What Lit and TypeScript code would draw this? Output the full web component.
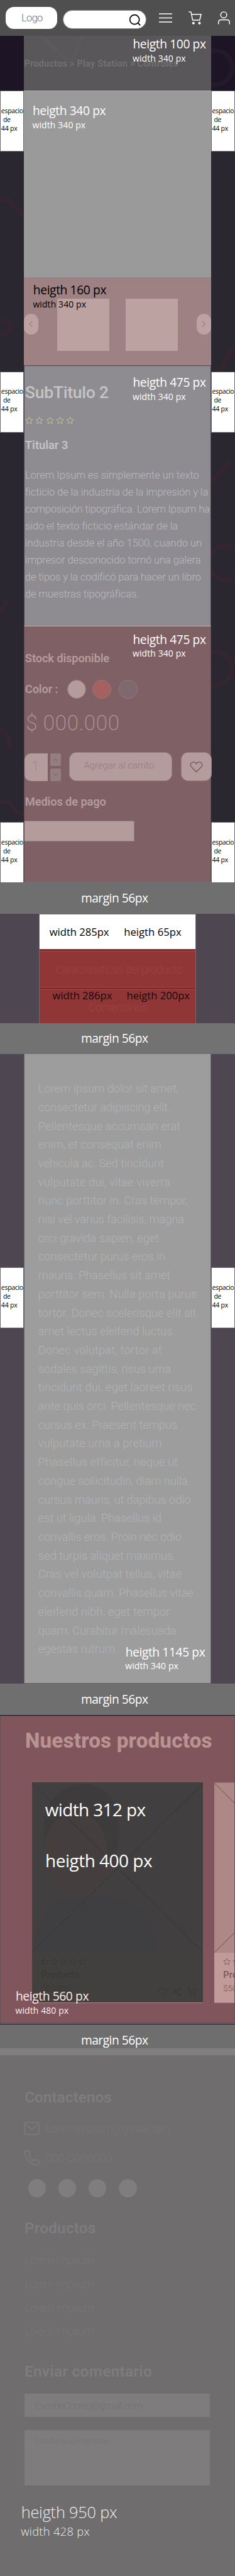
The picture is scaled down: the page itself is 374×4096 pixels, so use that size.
import { LitElement, html, css, svg, nothing } from "lit";
import { customElement, property } from "lit/decorators.js";

/** One line of text whose tracking is adjusted so that it spans exactly `w` pixels. */
@customElement("fit-line")
class FitLine extends LitElement {
  @property({ type: Number }) w = 100;
  @property() text = "";
  static styles = css`
    :host { display: block; white-space: pre; flex: none; }
    .ruler { display: block; }
    .run { display: inline-block; }
  `;
  firstUpdated() {
    const ruler = this.renderRoot.querySelector(".ruler") as HTMLElement;
    const run = this.renderRoot.querySelector(".run") as HTMLElement;
    const natural = (run.getBoundingClientRect().width / ruler.getBoundingClientRect().width) * this.w;
    run.style.letterSpacing = `${(this.w - natural) / this.text.length}px`;
  }
  render() {
    return html`<span class="ruler" style="width:${this.w}px"><span class="run">${this.text}</span></span>`;
  }
}

/** Measurement label: a large first line and a small second one. */
@customElement("size-note")
class SizeNote extends LitElement {
  @property() big = "";
  @property() small = "";
  @property({ type: Number }) bw = 133;
  @property({ type: Number }) sw = 97;
  static styles = css`
    :host { display: block; font-family: "Open Sans", "Noto Sans", sans-serif; color: #fff; }
    .big { font-size: 22px; line-height: 26px; padding-left: 0.5px; }
    .small { font-size: 16px; line-height: 26px; }
    :host([large]) .big { font-size: 29px; line-height: 34px; }
    :host([large]) .small { font-size: 21px; line-height: 36px; }
  `;
  render() {
    return html`<fit-line class="big" .w=${this.bw} .text=${this.big}></fit-line>
      <fit-line class="small" .w=${this.sw} .text=${this.small}></fit-line>`;
  }
}

@customElement("side-tag")
class SideTag extends LitElement {
  static styles = css`
    :host {
      display: block; box-sizing: border-box; width: 44px; height: 111px; flex: none;
      background: #fff; border: 1px solid #6a686b; color: #000;
      font: 12px/16px "Open Sans", "Noto Sans", sans-serif; padding: 27px 0 0 1px;
    }
    .mid { padding-left: 3.5px; }
  `;
  render() {
    return html`<fit-line .w=${40} .text=${"espacio"}></fit-line>
      <fit-line class="mid" .w=${13.5} .text=${"de"}></fit-line>
      <fit-line .w=${29.5} .text=${"44 px"}></fit-line>`;
  }
}

const STAR = "M12 1.8l3.1 6.9 7.1.7-5.4 4.9 1.6 7.4L12 17.9l-6.4 3.8 1.6-7.4L1.8 9.4l7.1-.7z";
const HEART = "M12 21L3 12C-.8 7.6 3 2.8 7 3.2c2.300 0 4 1.300 5 3 1-1.700 2.700-3 5-3 4-.4 7.800 4.400 4 8.800z";

const star = html`<svg class="star" viewBox="0 0 24 24"><path d=${STAR} /></svg>`;
const heart = html`<svg class="ico" viewBox="0 0 24 24"><path d=${HEART} /></svg>`;
const cart = html`<svg class="ico" viewBox="0 0 24 24"><path d="M0 1h4.500l3 15h12.800L23 5.500H5.500" /><circle class="dot" cx="9" cy="21.500" r="1.500" /><circle class="dot" cx="20" cy="21.500" r="1.500" /></svg>`;
const share = html`<svg class="ico" viewBox="0 0 24 24"><circle cx="18.500" cy="4.500" r="3" /><circle cx="5.500" cy="12" r="3" /><circle cx="18.500" cy="19.500" r="3" /><path d="M8 10.500l8-4.500M8 13.500l8 4.500" /></svg>`;
const chevron = (d: string) => html`<svg class="chev" viewBox="0 0 12 16"><path d=${d} /></svg>`;
const stars = html`${[0, 1, 2, 3, 4].map(() => star)}`;

const INTRO: [string, number][] = [
  ["Lorem Ipsum es simplemente un texto", 317],
  ["ficticio de la industria de la impresión y la", 333],
  ["composición tipográfica. Lorem Ipsum ha", 336],
  ["sido el texto ficticio estándar de la", 278],
  ["industria desde el año 1500, cuando un", 322],
  ["impresor desconocido tomó una galera", 320],
  ["de tipos y la codificó para hacer un libro", 320],
  ["de muestras tipográficas.", 207],
];

/* Each entry: the text of the line and the x at which it ends. */
const BODY: [string, number][] = [
  ["Lorem ipsum dolor sit amet,", 973], ["consectetur adipiscing elit.", 929],
  ["Pellentesque accumsan erat", 984], ["enim, et consequat enim", 880],
  ["vehicula ac. Sed tincidunt", 893], ["vulputate dui, vitae viverra", 929],
  ["nunc porttitor in. Cras tempor,", 1025], ["nisi vel varius facilisis, magna", 1004],
  ["orci gravida sapien, eget", 867], ["consectetur purus eros in", 901],
  ["mauris. Phasellus sit amet", 929], ["porttitor sem. Nulla porta purus", 1073],
  ["tortor. Donec scelerisque elit sit", 1071], ["amet lectus eleifend luctus.", 956],
  ["Donec volutpat, tortor at", 883], ["sodales sagittis, risus urna", 933],
  ["tincidunt dui, eget laoreet risus", 1050], ["ante quis orci. Pellentesque nec", 1069],
  ["cursus ex. Praesent tempus", 967], ["vulputate urna a pretium.", 898],
  ["Phasellus efficitur, neque ut", 967], ["congue sollicitudin, diam nulla", 1023],
  ["cursus mauris, ut dapibus odio", 1040], ["est ut ligula. Phasellus id", 880],
  ["convallis eros. Proin nec odio", 991], ["sed turpis aliquet maximus.", 958],
  ["Cras vel volutpat tellus, vitae", 991], ["convallis quam. Phasellus vitae", 1055],
  ["eleifend nibh, eget tempor", 927], ["quam. Curabitur malesuada", 960],
  ["egestas rutrum.", 642],
];

@customElement("app-root")
class AppRoot extends LitElement {
  static styles = css`
    :host { display: block; width: 374px; height: 4096px; overflow: hidden; background: #6f6d6e; }
    * { box-sizing: border-box; }
    svg { display: block; fill: none; flex: none; }
    .page { zoom: 0.87383; width: 428px; font-family: Roboto, "Open Sans", sans-serif; }
    .note { position: absolute; z-index: 2; }
    .dark { color: #0a0405; }

    .top { height: 65px; background: #4f4f4f; display: flex; padding-left: 10px; }
    .logo { margin-top: 13px; width: 94px; height: 40px; border-radius: 15px; background: #fff; color: #757575;
      font-weight: 300; font-size: 19px; line-height: 41px; padding-left: 29px; }
    .search { margin: 18.5px 22px 0 11px; width: 152px; height: 34px; border-radius: 17px; background: #fff; border: 1px solid #8a8a8a; padding: 5px 0 0 119px; }
    .search svg { width: 22px; height: 22px; stroke: #000; stroke-width: 2; }
    .top .ico { width: 24px; height: 24px; margin: 20.5px 30px 0 0; stroke: #fff; stroke-width: 1.7; overflow: visible; stroke-linejoin: round; }
    .top .dot { fill: #fff; }
    .top .user { margin-right: 0; margin-left: -1px; }

    .crumbs { position: relative; height: 100px; background: #1d1525; padding: 0 44px 0 43px; }
    .crumb { height: 100px; background: #5a575a; padding: 41.4px 0 0 1px; color: #737173; font-weight: 600; font-size: 16.5px; line-height: 20px; }
    .deco { position: absolute; left: 0; top: 0; stroke-linecap: round; }

    .stage { position: relative; display: grid; grid-template-columns: 44px 340px 44px; height: 1441px; background: #2b2731; }
    .side { position: relative; display: flex; flex-direction: column; }
    .gap1 { margin-top: 400px; }
    .gap2 { margin-top: 709px; }
    .photo { position: relative; height: 340px; background: #9a9a9a; border-top: 1px solid #b3b1b3; }
    .carousel { position: relative; height: 160px; background: #9e8182; display: flex; justify-content: space-between; align-items: flex-start; padding-top: 39px; }
    .arrow { width: 26px; height: 38px; border-radius: 13px; background: #bda2a2; margin-top: 27px; display: flex; align-items: center; justify-content: center; }
    .chev { width: 10px; height: 14px; stroke: #a08586; stroke-width: 2; }
    .thumbs { display: flex; gap: 30px; }
    .thumb { width: 95px; height: 95px; background: #bda2a2; }

    .info { position: relative; height: 474px; background: #8e8c91; border: 1px solid #4b484f; border-bottom: 0; padding-left: 0.5px; color: #c4c4c6; }
    .h2 { font-weight: 500; font-size: 30.5px; line-height: 36px; margin-top: 30.600px; }
    .stars { display: flex; gap: 3.800px; margin-top: 25px; }
    .star { width: 15px; height: 15px; stroke: #cbc596; stroke-width: 1.600; }
    .h3 { font-weight: 600; font-size: 21px; line-height: 26px; margin-top: 25.5px; }
    .intro { margin-top: 24.700px; font-weight: 300; font-size: 19px; line-height: 31px; color: #bababd; }

    .buy { position: relative; height: 467px; background: #7f6065; border: 1px solid #5f4c53; border-top-color: #c4aeb1; border-bottom-color: #7a6b6e; color: #b49c9c; }
    .buy .h3 { padding-left: 0.5px; }
    .buy .stock { margin-top: 45.5px; }
    .colors { display: flex; margin-top: 25px; height: 34px; }
    .colors .h3 { margin: 0 0 0; width: 77.5px; line-height: 34px; }
    .dotc { width: 34.5px; height: 34.5px; border-radius: 50%; border: 1px solid #94797c; margin-right: 13px; }
    .c1 { background: #b49c9c; margin-right: 11.5px; }
    .c2 { background: #a66060; }
    .c3 { background: #806870; }
    .price { margin: 23.500px 0 0 2px; font-weight: 200; font-size: 38px; line-height: 44px; }
    .row { display: flex; margin-top: 31px; height: 52px; width: 340px; }
    .qty { width: 42px; height: 50px; margin: 2px 5px 0 0; background: #b49c9c; border-radius: 12px 0 0 12px; color: #9c8384; font-weight: 200; font-size: 25px; line-height: 48px; text-align: center; padding-right: 4px; }
    .steps { display: flex; flex-direction: column; gap: 4px; margin: 2px 15px 0 0; }
    .step { width: 19px; height: 23px; background: #967d7f; border-radius: 2px; display: flex; align-items: center; justify-content: center; }
    .step .chev { width: 10px; height: 12px; stroke: #846a6d; }
    .add { width: 188px; height: 52px; border-radius: 13px; background: #b49c9c; border: 1px solid #997f81; color: #957b7c; font-weight: 300; font-size: 17px; line-height: 48px; padding-left: 25.5px; margin-right: 15.500px; }
    .fav { width: 56px; height: 52px; border-radius: 13px; background: #b49c9c; border: 1px solid #997f81; display: flex; align-items: center; justify-content: center; }
    .fav .ico { width: 24px; height: 24px; stroke: #7c6062; stroke-width: 1.800; }
    .pay { margin-top: 20.500px; width: 200px; height: 38.5px; background: #b49c9c; border: 1px solid #967c7d; border-left: 0; }

    .band { height: 56px; background: #6f6f6f; color: #fff; font: 22px/56px "Open Sans", "Noto Sans", sans-serif; padding-left: 147.5px; }
    .band fit-line { margin-top: 0.5px; }
    .b2 { background: #727272; }
    .b4 { height: 43px; background: #6e6e6e; }
    .stripe { height: 13px; background: #808080; }

    .tabs { height: 199px; background: #4e4752; padding: 0 71px; }
    .box { position: relative; height: 199px; border: 1px solid #706a6e; border-bottom: 0; background: #903637; font: 19px/28px "Open Sans", "Noto Sans", sans-serif; }
    .white { height: 64px; background: #fff; color: #000; display: flex; padding: 19px 0 0 18px; gap: 27px; border-bottom: 1px solid #7a5c5f; }
    .tab { color: #9b4243; font: 300 20px/26px Roboto, sans-serif; height: 66px; border-top: 1px solid #a04647; border-bottom: 1px solid #a04647; margin-top: 3px; padding: 20.500px 0 0 29px; box-shadow: 0 -3px 0 #822b2d; }
    .tab.second { padding: 19.500px 0 0 89.5px; border-bottom: 0; height: 62px; }
    .over { position: absolute; display: flex; gap: 26.500px; left: 23.500px; top: 134px; color: #1d070a; }

    .text { position: relative; display: grid; grid-template-columns: 44px 340px 44px; height: 1146px; background: #4e4752; }
    .text .first { padding-top: 388.500px; }
    .text .copy { background: #9d9d9e; border: 1px solid #67646a; border-top: 0; padding: 46px 0 0 24.5px; color: #b2b2b2; font-weight: 300; font-size: 21px; line-height: 34px; }

    .shop { position: relative; border-top: 2px solid #1d1525; border-bottom: 1px solid #1d1525; height: 563.500px; }
    .panel { height: 560.500px; background: #80565c; border: 1px solid #665058; overflow: hidden; padding-top: 23.700px; position: relative; }
    .title { font-weight: 800; font-size: 38px; line-height: 44px; color: #b99292; padding-left: 44.5px; }
    .rule { height: 8px; width: 77px; margin: 23.500px 0 0 184px; background: #82555b; }
    .cards { display: flex; gap: 20px; padding-left: 57px; margin-top: 21.5px; }
    .card { flex: none; width: 312px; height: 401px; background: #c19b99; border-top: 1px solid #9b7073; border-bottom: 1px solid #a98083; color: #7a5556; }
    .pic { height: 309px; width: 312px; background: #ae8886; stroke: #855d5f; stroke-width: 1.300; }
    .meta { display: flex; height: 90px; padding: 9px 13px 0 16.5px; }
    .meta .stars { margin: 0; gap: 3px; }
    .meta .star { width: 14px; height: 14px; stroke: currentColor; }
    .left { flex: 1; }
    .name { font-weight: 500; font-size: 16.5px; line-height: 22px; margin-top: 6.300px; }
    .cost { font-weight: 300; font-size: 15.500px; line-height: 20px; margin-top: 3.500px; }
    .acts { display: flex; gap: 9.500px; margin-top: 54px; }
    .acts .ico { width: 16.5px; height: 16.5px; stroke: currentColor; stroke-width: 1.700; overflow: visible; }
    .card.main { background: #42403e; color: #393736; border-top-color: #42403e; }
    .card.main .pic { background: #413f40; stroke: #3a3838; }
    .pic .soft { stroke: none; }
    .capt { position: absolute; color: #fff; font: 32px/40px "Open Sans", "Noto Sans", sans-serif; }

    .footer { position: relative; height: 949.500px; background: #6f6d6e; padding: 59px 44.5px 0; color: #7b797a; font-size: 20px; font-weight: 300; }
    .h4 { font-weight: 600; font-size: 28px; line-height: 34px; color: #7e7c7d; }
    .line { display: flex; align-items: center; gap: 11.5px; height: 30px; line-height: 30px; margin: 25.300px 0 0 -1.500px; color: #787677; }
    .line svg { width: 29px; height: 29px; stroke: #7b797a; stroke-width: 1.700; stroke-linejoin: round; }
    .line.tel { margin-top: 23.5px; }
    .dots { display: flex; gap: 22px; margin: 23.5px 0 38.700px 6.500px; }
    .dots i { width: 33px; height: 33px; border-radius: 50%; background: #7f7d7e; }
    .links { margin: 21.500px 0 33.800px; line-height: 43px; color: #787677; }
    .field { margin: 22.500px 0 0; height: 43px; background: #7e7c7d; color: #757374; font-size: 18px; line-height: 46px; padding-left: 18px; width: 338px; }
    .area { margin-top: 24px; height: 101px; font-size: 15.500px; line-height: 40px; }

    .n-crumb { left: 241.5px; top: 2.5px; }
    .n-photo { left: 59px; top: 24px; }
    .n-car { left: 60px; top: 350.500px; color: #000; }
    .n-info { left: 241.5px; top: 518px; }
    .n-buy { left: 241.5px; top: 986px; }
    .n-text { left: 228px; top: 1075.500px; }
    .n-shop { left: 28px; top: 498px; color: #ffeceb; }
    .n-foot { left: 38px; top: 814px; color: #ececec; }
    .k1 { left: 82px; top: 151px; }
    .k2 { left: 82.500px; top: 244px; }
  `;

  private card(main: boolean) {
    return html`<div class="card ${main ? "main" : ""}">
      <svg class="pic" viewBox="0 0 312 309">
        ${main
          ? svg`<ellipse class="soft" cx="86" cy="118" rx="64" ry="90" fill="#463f3d" opacity=".7"/>
            <path class="soft" d="M22 70C28-10 150-30 158 70 162 120 150 130 140 150 136 80 120 62 90 58 60 56 36 62 22 110z" fill="#3d3b3c" opacity=".8"/>
            <path class="soft" d="M4 309C10 240 40 205 80 212 150 205 214 200 228 309z" fill="#3f3e40"/>`
          : nothing}
        <path d="M0 0L312 309M312 0L0 309" />
      </svg>
      <div class="meta">
        <div class="left">
          <div class="stars">${stars}</div>
          <fit-line class="name" .w=${70} .text=${"Producto"}></fit-line>
          <fit-line class="cost" .w=${53} .text=${"$50.000"}></fit-line>
        </div>
        <div class="acts">${heart}${share}${cart}</div>
      </div>
    </div>`;
  }

  private margin(cls = "") {
    return html`<div class="band ${cls}"><fit-line .w=${122} .text=${"margin 56px"}></fit-line></div>`;
  }

  render() {
    return html`<div class="page">
      <header class="top">
        <div class="logo"><fit-line .w=${38.5} .text=${"Logo"}></fit-line></div>
        <div class="search"><svg viewBox="0 0 22 22"><circle cx="10.500" cy="10.500" r="8.600" /><path d="M16.500 16.500l4.500 4.500" /></svg></div>
        <svg class="ico" viewBox="0 0 24 24"><path d="M0 4.500h24M0 12h24M0 19.500h24" /></svg>
        ${cart}
        <svg class="ico user" viewBox="0 0 24 24"><circle cx="11.500" cy="6.500" r="5.500" /><path d="M2 23.500v-3.500q0-4.500 4.500-4.500h11q4.500 0 4.500 4.500v3.500" /></svg>
      </header>

      <section class="crumbs">
        <div class="crumb"><fit-line .w=${280.5} .text=${"Productos > Play Station > Controles"}></fit-line></div>
        <svg class="deco" width="428" height="100" viewBox="0 0 428 100">
          <path d="M75 0L130 52 148 0" stroke="#606060" stroke-width="8" opacity=".25" />
          <circle cx="392" cy="58" r="31" stroke="#6a4a5c" stroke-width="8" opacity=".1" />
        </svg>
        <size-note class="note n-crumb" big="heigth 100 px" small="width 340 px"></size-note>
      </section>

      <main class="stage">
        <svg class="deco" width="428" height="1440" viewBox="0 0 428 1440" stroke="#33262f" stroke-width="9">
          <path d="M0 199Q16 195 24 208T46 226" />
          <circle cx="6" cy="431" r="13" />
          <path d="M422 472L390 530M415 680L384 712M12 932L-6 952" />
          <circle cx="411" cy="859" r="31" />
          <circle cx="392" cy="1052" r="30" />
          <path d="M0 1162Q18 1172 18 1192M0 1295Q16 1291 24 1304T46 1318" />
        </svg>
        <div class="side">
          <side-tag></side-tag><side-tag class="gap1"></side-tag><side-tag class="gap2"></side-tag>
        </div>
        <div>
          <div class="photo"></div>
          <div class="carousel">
            <div class="arrow">${chevron("M9 2L3 8l6 6")}</div>
            <div class="thumbs"><div class="thumb"></div><div class="thumb"></div></div>
            <div class="arrow">${chevron("M3 2l6 6-6 6")}</div>
          </div>
          <div class="info">
            <fit-line class="h2" .w=${152} .text=${"SubTitulo 2"}></fit-line>
            <div class="stars">${stars}</div>
            <fit-line class="h3" .w=${78.5} .text=${"Titular 3"}></fit-line>
            <div class="intro">${INTRO.map(([t, w]) => html`<fit-line .w=${w} .text=${t}></fit-line>`)}</div>
          </div>
          <div class="buy">
            <fit-line class="h3 stock" .w=${153.5} .text=${"Stock disponible"}></fit-line>
            <div class="colors">
              <fit-line class="h3" .w=${60} .text=${"Color :"}></fit-line>
              <span class="dotc c1"></span><span class="dotc c2"></span><span class="dotc c3"></span>
            </div>
            <fit-line class="price" .w=${171} .text=${"$ 000.000"}></fit-line>
            <div class="row">
              <div class="qty">1</div>
              <div class="steps">
                <div class="step">${chevron("M1.500 11L6 6l4.500 5")}</div>
                <div class="step">${chevron("M1.500 6L6 11l4.500-5")}</div>
              </div>
              <div class="add"><fit-line .w=${128} .text=${"Agregar al carrito"}></fit-line></div>
              <div class="fav">${heart}</div>
            </div>
            <fit-line class="h3" .w=${147.5} .text=${"Medios de pago"}></fit-line>
            <div class="pay"></div>
          </div>
        </div>
        <div class="side">
          <side-tag></side-tag><side-tag class="gap1"></side-tag><side-tag class="gap2"></side-tag>
        </div>
        <size-note class="note n-photo" big="heigth 340 px" small="width 340 px"></size-note>
        <size-note class="note n-car" big="heigth 160 px" small="width 340 px"></size-note>
        <size-note class="note n-info" big="heigth 475 px" small="width 340 px"></size-note>
        <size-note class="note n-buy" big="heigth 475 px" small="width 340 px"></size-note>
      </main>

      ${this.margin()}
      <section class="tabs">
        <div class="box">
          <div class="white">
            <fit-line .w=${108.5} .text=${"width 285px"}></fit-line>
            <fit-line .w=${105} .text=${"heigth 65px"}></fit-line>
          </div>
          <div class="tab"><fit-line .w=${231} .text=${"Características del producto"}></fit-line></div>
          <div class="tab second"><fit-line .w=${106} .text=${"Comentarios"}></fit-line></div>
          <div class="over">
            <fit-line .w=${108.5} .text=${"width 286px"}></fit-line>
            <fit-line .w=${115} .text=${"heigth 200px"}></fit-line>
          </div>
        </div>
      </section>
      ${this.margin("b2")}

      <section class="text">
        <div class="side first"><side-tag></side-tag></div>
        <div class="copy">${BODY.map(([t, end]) => html`<fit-line .w=${(end - 207) / 3} .text=${t}></fit-line>`)}</div>
        <div class="side first"><side-tag></side-tag></div>
        <size-note class="note n-text" .bw=${145} big="heigth 1145 px" small="width 340 px"></size-note>
      </section>
      ${this.margin()}

      <section class="shop">
        <div class="panel">
          <fit-line class="title" .w=${341} .text=${"Nuestros productos"}></fit-line>
          <div class="rule"></div>
          <div class="cards">${this.card(true)}${this.card(false)}</div>
        </div>
        <fit-line class="capt k1" .w=${183} .text=${"width 312 px"}></fit-line>
        <fit-line class="capt k2" .w=${194.5} .text=${"heigth 400 px"}></fit-line>
        <size-note class="note n-shop" big="heigth 560 px" small="width 480 px"></size-note>
      </section>
      ${this.margin("b4")}
      <div class="stripe"></div>

      <footer class="footer">
        <fit-line class="h4" .w=${159} .text=${"Contactenos"}></fit-line>
        <div class="line">
          <svg viewBox="0 0 24 24"><rect x="1" y="3" width="22" height="18" rx="2" /><path d="M1.500 5L12 13 22.500 5" /></svg>
          <fit-line .w=${225.5} .text=${"LoremImpsum@gmail.com"}></fit-line>
        </div>
        <div class="line tel">
          <svg viewBox="0 0 24 24"><path d="M22.500 16.900v3.200a2.200 2.200 0 0 1-2.400 2.200A21 21 0 0 1 1.200 3.500 2.200 2.200 0 0 1 3.400 1.200h3.200a2.200 2.200 0 0 1 2.200 1.900c.1 1 .4 2 .7 2.900a2.200 2.200 0 0 1-.5 2.300L7.700 9.600a17 17 0 0 0 6.400 6.400l1.400-1.300a2.200 2.200 0 0 1 2.300-.5c.9.300 1.900.6 2.900.7a2.200 2.200 0 0 1 1.800 2z" /></svg>
          <fit-line .w=${121} .text=${"000-0000000"}></fit-line>
        </div>
        <div class="dots"><i></i><i></i><i></i><i></i></div>
        <fit-line class="h4" .w=${130} .text=${"Productos"}></fit-line>
        <div class="links">${[0, 1, 2, 3].map(() => html`<fit-line .w=${126} .text=${"Lorem Impsum"}></fit-line>`)}</div>
        <fit-line class="h4" .w=${232.5} .text=${"Enviar comentario"}></fit-line>
        <div class="field"><fit-line .w=${197} .text=${"EscribeCorreo@gmail.com"}></fit-line></div>
        <div class="field area"><fit-line .w=${136} .text=${"Escribe tu comentario"}></fit-line></div>
        <size-note large class="note n-foot" .bw=${175} .sw=${125.5} big="heigth 950 px" small="width 428 px"></size-note>
      </footer>
    </div>`;
  }
}
